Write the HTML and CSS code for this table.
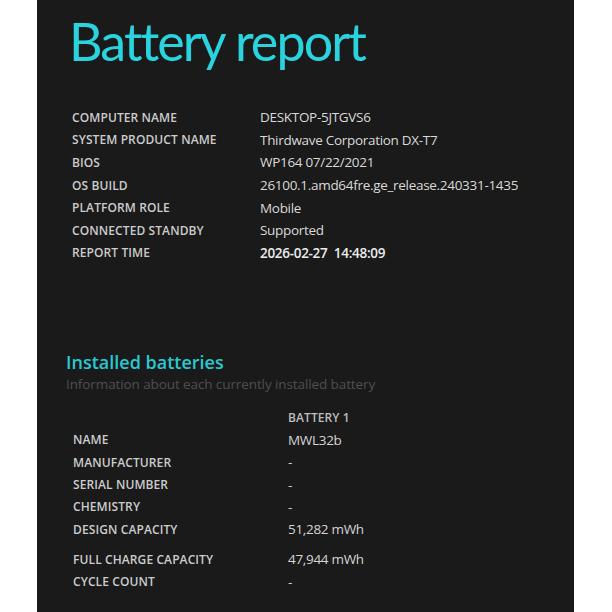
FILE: index.html
```html
<!DOCTYPE html>
<html>
<head>
<meta charset="utf-8">
<link rel="stylesheet" href="styles.css">
</head>
<body>
<main class="panel">
  <h1 class="title">Battery report</h1>
  <div class="info">
    <div class="row"><div class="label">COMPUTER NAME</div><div class="value">DESKTOP-5JTGVS6</div></div>
    <div class="row"><div class="label">SYSTEM PRODUCT NAME</div><div class="value">Thirdwave Corporation DX-T7</div></div>
    <div class="row"><div class="label">BIOS</div><div class="value">WP164 07/22/2021</div></div>
    <div class="row"><div class="label">OS BUILD</div><div class="value">26100.1.amd64fre.ge_release.240331-1435</div></div>
    <div class="row"><div class="label">PLATFORM ROLE</div><div class="value">Mobile</div></div>
    <div class="row"><div class="label">CONNECTED STANDBY</div><div class="value">Supported</div></div>
    <div class="row"><div class="label">REPORT TIME</div><div class="value strong">2026-02-27&nbsp;&nbsp;14:48:09</div></div>
  </div>

  <section class="batteries">
    <h2 class="section-title">Installed batteries</h2>
    <p class="section-sub">Information about each currently installed battery</p>
    <div class="btable">
      <div class="row head-row"><div class="label"></div><div class="label head">BATTERY 1</div></div>
      <div class="row"><div class="label">NAME</div><div class="value">MWL32b</div></div>
      <div class="row"><div class="label">MANUFACTURER</div><div class="value">-</div></div>
      <div class="row"><div class="label">SERIAL NUMBER</div><div class="value">-</div></div>
      <div class="row"><div class="label">CHEMISTRY</div><div class="value">-</div></div>
      <div class="row"><div class="label">DESIGN CAPACITY</div><div class="value">51,282 mWh</div></div>
      <div class="row spaced"><div class="label">FULL CHARGE CAPACITY</div><div class="value">47,944 mWh</div></div>
      <div class="row"><div class="label">CYCLE COUNT</div><div class="value">-</div></div>
    </div>
  </section>
</main>
</body>
</html>
```

FILE: styles.css
```css
html, body {
  margin: 0;
  padding: 0;
  background: #ffffff;
}

body {
  font-family: "Open Sans", "Noto Sans", sans-serif;
}

.panel {
  margin-left: 37px;
  width: 537px;
  height: 612px;
  background: #1a1a1a;
  box-sizing: border-box;
  padding: 8px 0 0 35px;
  overflow: hidden;
}

.title {
  margin: 0 0 0 -3px;
  height: 74px;
  font-family: Lato, "Open Sans", sans-serif;
  font-weight: 400;
  font-size: 52px;
  line-height: 66px;
  letter-spacing: -1.9px;
  color: #2ad4df;
}

.info {
  margin-top: 24px;
}

.row {
  display: flex;
  align-items: center;
  height: 22.6px;
}

.info .label {
  width: 188px;
  flex: none;
}

.label {
  font-size: 12px;
  font-weight: 600;
  color: #cccccc;
  letter-spacing: 0.1px;
  white-space: nowrap;
}

.value {
  font-size: 13.5px;
  color: #d9d9d9;
  white-space: nowrap;
  letter-spacing: -0.3px;
}

.value.strong {
  font-weight: 600;
  color: #ececec;
}

.batteries {
  margin-top: 86px;
  margin-left: -6px;
}

.section-title {
  margin: 0;
  font-size: 18px;
  font-weight: 600;
  line-height: 24px;
  color: #2ac8d2;
}

.section-sub {
  margin: 0;
  font-size: 13.5px;
  line-height: 20px;
  color: #4f4f4f;
  letter-spacing: -0.1px;
}

.btable {
  margin-top: 12px;
  margin-left: 7px;
}

.btable .row {
  height: 22.4px;
}

.btable .label {
  width: 215px;
  flex: none;
}

.btable .value {
  color: #d4d4d4;
}

.label.head {
  color: #bdbdbd;
}

.btable .row.spaced {
  box-sizing: content-box;
  padding-top: 7.5px;
}
```
